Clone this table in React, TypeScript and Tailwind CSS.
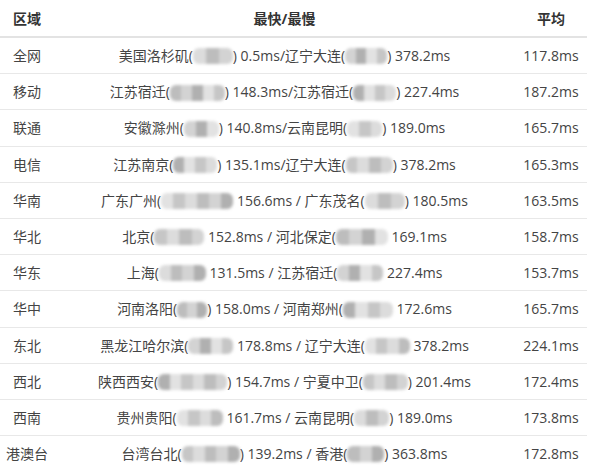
import React from "react";

type Row = [string, string, number, string, number, string, string];

const rows: Row[] = [
  ["全网", "美国洛杉矶(", 40, ") 0.5ms/辽宁大连(", 42, ") 378.2ms", "117.8ms"],
  ["移动", "江苏宿迁(", 55, ") 148.3ms/江苏宿迁(", 43, ") 227.4ms", "187.2ms"],
  ["联通", "安徽滁州(", 35, ") 140.8ms/云南昆明(", 35, ") 189.0ms", "165.7ms"],
  ["电信", "江苏南京(", 44, ") 135.1ms/辽宁大连(", 47, ") 378.2ms", "165.3ms"],
  ["华南", "广东广州(", 72, " 156.6ms / 广东茂名(", 40, ") 180.5ms", "163.5ms"],
  ["华北", "北京(", 50, " 152.8ms / 河北保定(", 52, " 169.1ms", "158.7ms"],
  ["华东", "上海(", 47, " 131.5ms / 江苏宿迁(", 46, " 227.4ms", "153.7ms"],
  ["华中", "河南洛阳(", 30, ") 158.0ms / 河南郑州(", 50, " 172.6ms", "165.7ms"],
  ["东北", "黑龙江哈尔滨(", 45, " 178.8ms / 辽宁大连(", 45, " 378.2ms", "224.1ms"],
  ["西北", "陕西西安(", 69, ") 154.7ms / 宁夏中卫(", 45, ") 201.4ms", "172.4ms"],
  ["西南", "贵州贵阳(", 46, " 161.7ms / 云南昆明(", 35, ") 189.0ms", "173.8ms"],
  ["港澳台", "台湾台北(", 58, ") 139.2ms / 香港(", 37, ") 363.8ms", "172.8ms"],
];

const shades = ["#dcdcdc", "#bdbdbd", "#d3d3d3", "#b0b0b0", "#e2e2e2", "#c6c6c6"];

function Blur({ w, seed }: { w: number; seed: number }) {
  const n = Math.max(3, Math.round(w / 12));
  const blocks = Array.from({ length: n }, (_, i) => shades[(i + seed) % shades.length]);
  return (
    <span
      className="inline-flex h-[16px] align-middle overflow-hidden rounded-[6px] blur-[1.5px] -mt-[2px]"
      style={{ width: w }}
    >
      {blocks.map((c, i) => (
        <span key={i} className="h-full flex-1" style={{ background: c }} />
      ))}
    </span>
  );
}

export default function App() {
  return (
    <div
      className="w-[600px] h-[468px] overflow-hidden bg-white text-[14px] text-[#444]"
      style={{ fontFamily: '"Open Sans", "Noto Sans CJK SC", sans-serif' }}
    >
      <div className="w-[587px]">
        <div className="flex h-[38px] items-center border-b-2 border-[#e3e3e3] font-bold text-[#333]">
          <div className="w-[54px] text-center">区域</div>
          <div className="w-[461px] text-center">最快/最慢</div>
          <div className="w-[72px] text-center">平均</div>
        </div>
        {rows.map((r, i) => (
          <div
            key={i}
            className="flex h-[36.2px] items-center border-b border-[#e8e8e8] whitespace-pre"
          >
            <div className="w-[54px] text-center">{r[0]}</div>
            <div className="w-[461px] text-center">
              {r[1]}
              <Blur w={r[2]} seed={i} />
              {r[3]}
              <Blur w={r[4]} seed={i + 2} />
              {r[5]}
            </div>
            <div className="w-[72px] text-center">{r[6]}</div>
          </div>
        ))}
      </div>
    </div>
  );
}
